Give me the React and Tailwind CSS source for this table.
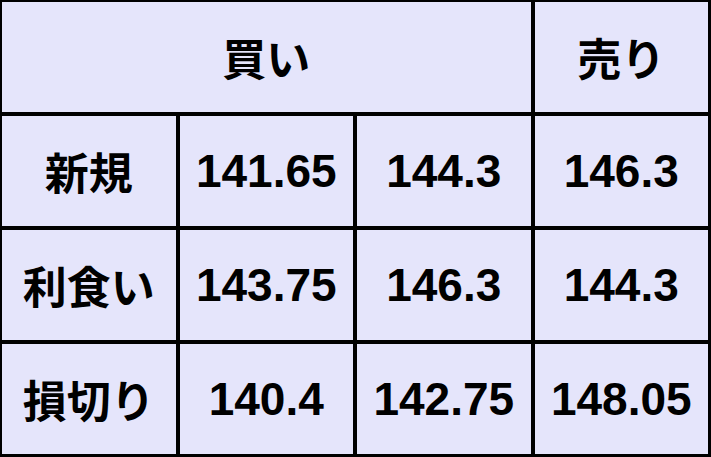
import { Fragment } from "react";

export default function App() {
  const cell =
    "bg-[#e5e5fb] flex items-center justify-center text-black font-bold leading-none";
  const jp = "text-[44px] [font-family:'Noto_Sans_CJK_JP','Noto_Sans_CJK_SC',sans-serif]";
  const num = "text-[46px] [font-family:'Liberation_Sans',Arial,sans-serif]";
  const rows = [
    ["新規", "141.65", "144.3", "146.3"],
    ["利食い", "143.75", "146.3", "144.3"],
    ["損切り", "140.4", "142.75", "148.05"],
  ];
  return (
    <div className="w-[711px] h-[457px] bg-black pl-[2px] pt-[2px] pr-[3px] pb-[3px] grid grid-cols-4 grid-rows-4 gap-[4px]">
      <div className={`${cell} ${jp} col-span-3`}>買い</div>
      <div className={`${cell} ${jp}`}>売り</div>
      {rows.map((r) => (
        <Fragment key={r[0]}>
          <div className={`${cell} ${jp}`}>{r[0]}</div>
          <div className={`${cell} ${num}`}>{r[1]}</div>
          <div className={`${cell} ${num}`}>{r[2]}</div>
          <div className={`${cell} ${num}`}>{r[3]}</div>
        </Fragment>
      ))}
    </div>
  );
}
